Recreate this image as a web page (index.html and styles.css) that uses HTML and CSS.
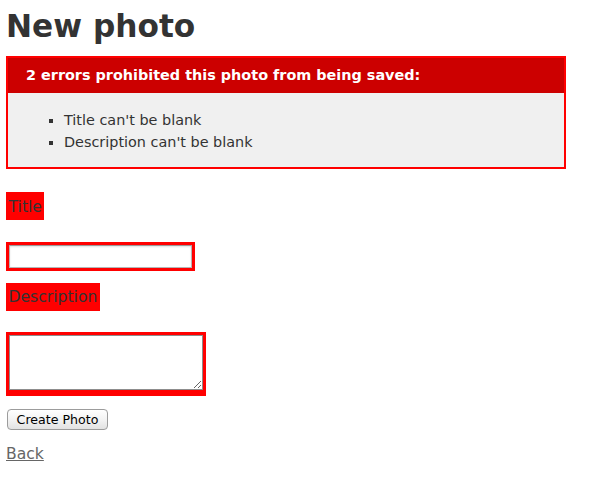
FILE: index.html
```html
<!DOCTYPE html>
<html>
<head>
<meta charset="utf-8">
<title>New photo</title>
<link rel="stylesheet" href="styles.css">
</head>
<body>
<h1 class="page-title">New photo</h1>
<form class="photo-form" action="#" method="post">
  <div id="error_explanation" class="error-box">
    <h2 class="error-head">2 errors prohibited this photo from being saved:</h2>
    <ul class="error-list">
      <li>Title can't be blank</li>
      <li>Description can't be blank</li>
    </ul>
  </div>
  <div class="field">
    <div class="field_with_errors"><label class="field-label" for="photo_title">Title</label></div><br>
    <div class="field_with_errors"><input class="text-input" type="text" id="photo_title" name="photo[title]"></div>
  </div>
  <div class="field">
    <div class="field_with_errors"><label class="field-label" for="photo_description">Description</label></div><br>
    <div class="field_with_errors field-area"><textarea class="text-area" id="photo_description" name="photo[description]"></textarea></div>
  </div>
  <div class="actions">
    <button class="submit-btn" type="submit">Create Photo</button>
  </div>
</form>
<a class="back-link" href="#">Back</a>
</body>
</html>
```
FILE: styles.css
```css
html, body {
  background-color: #fff;
}
body {
  margin: 0;
  padding: 0 6px;
  color: #333;
  font-family: "DejaVu Sans", Verdana, sans-serif;
  font-size: 15.6px;
  line-height: 21.6px;
}
.page-title {
  font-size: 31.2px;
  line-height: 37px;
  font-weight: bold;
  margin: 8px 0 11px 0;
  color: #333;
}
.photo-form {
  margin: 0;
}
.error-box {
  box-sizing: border-box;
  width: 560px;
  border: 2px solid #ff0000;
  padding: 0 8px;
  margin-bottom: 23px;
  background-color: #f0f0f0;
}
.error-head {
  margin: 0 -8px;
  padding: 6px 6px 6px 18px;
  background-color: #cc0000;
  color: #fff;
  font-size: 14.4px;
  line-height: 23px;
  font-weight: bold;
  text-align: left;
}
.error-list {
  margin: 16px 0 14px 0;
  padding-left: 48px;
}
.error-list li {
  list-style: square;
  font-size: 14.4px;
  line-height: 22px;
}
.field {
  margin-bottom: 12px;
}
.field_with_errors {
  display: table;
  padding: 2.5px;
  background-color: #ff0000;
}
.field-label {
  display: block;
  padding-top: 1px;
  line-height: 22px;
  color: #333;
}
.text-input {
  display: block;
  box-sizing: border-box;
  width: 183px;
  height: 23px;
  margin: 0.5px;
  padding: 2px 3px;
  border: 1px solid #b5b5b5;
  border-top-color: #9a9a9a;
  box-shadow: inset 0 1px 2px rgba(0,0,0,0.12);
  background: #fff;
  font-size: 13px;
}
.field-area {
  padding: 3px 3px 6px 3px;
}
.text-area {
  display: block;
  box-sizing: border-box;
  width: 194px;
  height: 55px;
  margin: 0;
  padding: 2px;
  border: 1px solid #8d8d8d;
  background: #fff;
  font-size: 13px;
}
.actions {
  margin-bottom: 14px;
  padding-top: 1px;
  line-height: 0;
}
.submit-btn {
  box-sizing: border-box;
  height: 21px;
  width: 101px;
  margin: 0 0 0 1px;
  padding: 0 5px;
  border: 1px solid #9c9c9c;
  border-radius: 4px;
  background: linear-gradient(#ffffff, #f3f3f3 50%, #e2e2e2);
  color: #000;
  font-family: "DejaVu Sans", sans-serif;
  font-size: 12.6px;
  line-height: 19px;
}
.back-link {
  color: #666;
  text-decoration: underline;
}
```
